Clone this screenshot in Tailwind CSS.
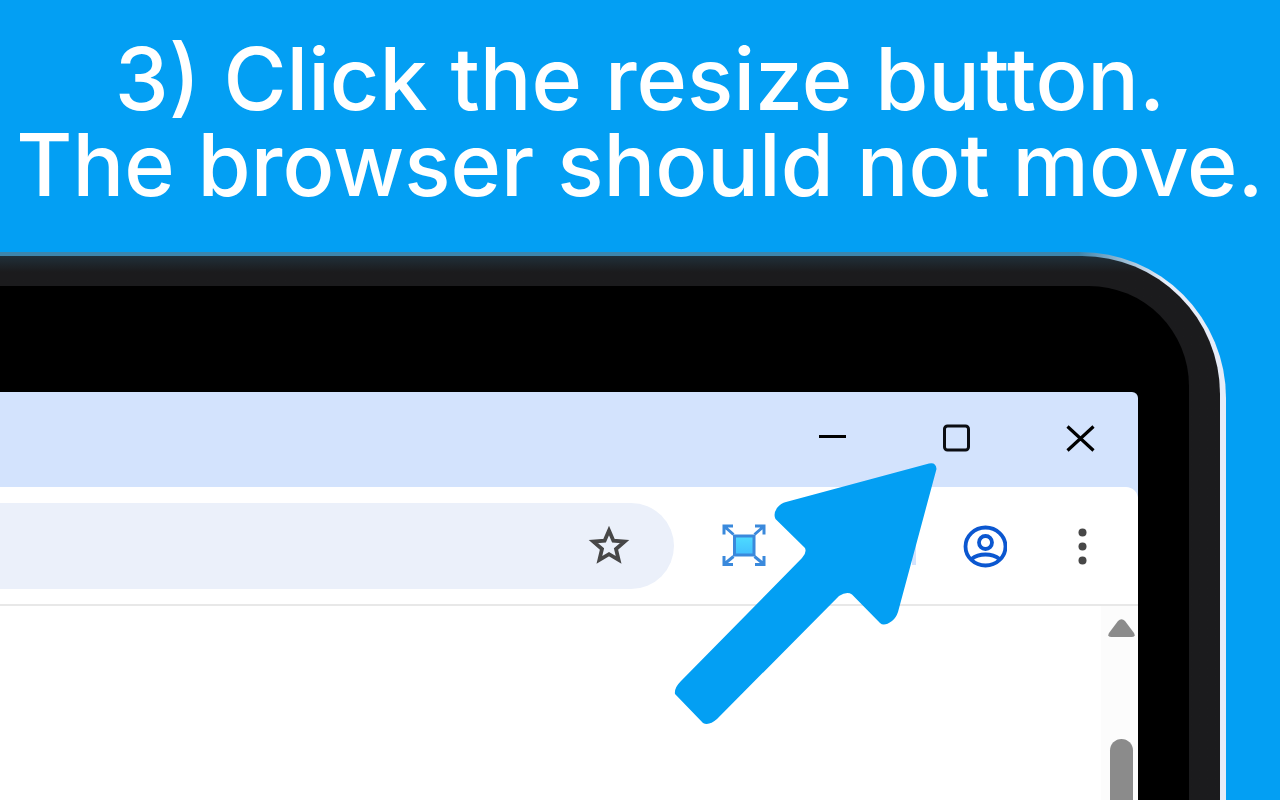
<!DOCTYPE html>
<html lang="en">
<head>
<meta charset="utf-8">
<meta name="viewport" content="width=device-width, initial-scale=1">
<title>Step 3: click the resize button</title>
<script src="https://cdn.jsdelivr.net/npm/@tailwindcss/browser@4"></script>
</head>
<body class="flex h-screen flex-col overflow-hidden bg-[#039ff3]">
<header class="h-[252px] shrink-0 pt-9 text-center">
  <h1 class="whitespace-nowrap font-['Inter','Liberation_Sans',sans-serif] text-[86px] leading-[86px] font-medium text-white">3) Click the resize button.<br>The browser should not move.</h1>
</header>

<!-- Laptop lid: metal rim, rubber edge, black bezel, screen -->
<div class="mr-[54px] min-h-0 flex-1 rounded-tr-[146px] bg-linear-to-r from-[#3d86ad] from-88% to-[#e6ecf8] to-95% pt-1 pr-[6px]">
  <div class="h-full rounded-tr-[138px] bg-[#1b1b1d] bg-linear-to-b from-[#20303a] to-[#1b1b1d] to-[16px] pt-[30px] pr-[31px]">
    <div class="h-full rounded-tr-[100px] bg-black pt-[106px] pr-[51px]">
      <main class="relative flex h-full flex-col overflow-hidden rounded-tr-md bg-[#d3e3fd]">
        <div class="flex h-[95px] shrink-0 justify-end gap-2">
          <button class="flex w-[116px] items-center justify-center" aria-label="Minimize">
            <svg class="h-8 w-8" viewBox="0 0 32 32" fill="none" stroke="#000" stroke-width="3"><path d="M3 12.500h27"/></svg>
          </button>
          <button class="flex w-[116px] items-center justify-center" aria-label="Resize">
            <svg class="h-8 w-8" viewBox="0 0 32 32" fill="none" stroke="#0b0d12" stroke-width="3"><rect x="4.500" y="2" width="24" height="24" rx="3"/></svg>
          </button>
          <button class="flex w-[116px] items-center justify-center" aria-label="Close">
            <svg class="h-8 w-8" viewBox="0 0 32 32" fill="none" stroke="#000" stroke-width="3.200"><path d="M3.500 2.500l26 24M29.500 2.500l-26 24"/></svg>
          </button>
        </div>

        <div class="flex h-[119px] shrink-0 items-center rounded-tr-xl border-b-2 border-[#e8e8e8] bg-white">
          <div class="flex h-[86px] min-w-0 flex-1 items-center rounded-r-full bg-[#ebf0fa] pr-[44px]">
            <input class="h-full min-w-0 flex-1 bg-transparent outline-none" type="text" aria-label="Address">
            <button aria-label="Bookmark this page">
              <svg class="h-[42px] w-[42px]" viewBox="0 0 42 42" fill="none" stroke="#474747" stroke-width="3.800"><path d="M21 5.500l4.400 10.200 11.200.9-8.600 7.400 2.600 10.800L21 29.200l-9.600 5.600 2.600-10.800-8.600-7.400 11.200-.9z"/></svg>
            </button>
          </div>
          <button class="ml-[38px] flex w-16 justify-center" aria-label="Window resizer extension">
            <svg class="h-11 w-11" viewBox="0 0 44 44" fill="none" stroke="#3a89dc" stroke-width="3">
              <defs><linearGradient id="cyan" x1="0" y1="0" x2="0" y2="1"><stop stop-color="#4edcff"/><stop offset="1" stop-color="#42bfff"/></linearGradient></defs>
              <rect x="12.500" y="12" width="19.500" height="19" fill="url(#cyan)"/>
              <path d="M2 10.500V2h9M3 3l8.500 7.500M33 2h9V10.500M41 3L32.500 10.500M2 32v8.500h9M3 39.500l8.500-7M33 40.500h9V32M41 39.500L32.500 32.500"/>
            </svg>
          </button>
          <div class="ml-[136px] h-[38px] w-1 bg-[#d3e3fd]"></div>
          <button class="ml-[37px] flex w-16 justify-center" aria-label="Profile">
            <svg class="h-11 w-11" viewBox="0 0 44 44" fill="none" stroke="#0b57d0" stroke-width="3.800"><ellipse cx="22.500" cy="22.500" rx="20" ry="19"/><circle cx="22.500" cy="18.500" r="6.500"/><path d="M8.500 35c7.500-6 20.500-6 28 0"/></svg>
          </button>
          <button class="mr-[23px] ml-[34px] flex w-16 justify-center" aria-label="Menu">
            <svg class="h-11 w-11" viewBox="0 0 44 44" fill="#474747"><circle cx="21.500" cy="8.500" r="4"/><circle cx="21.500" cy="22.500" r="4"/><circle cx="21.500" cy="36.500" r="4"/></svg>
          </button>
        </div>

        <div class="flex min-h-0 flex-1 justify-end bg-white">
          <div class="flex w-[37px] flex-col items-center bg-[#fcfcfc] pt-[13px]">
            <svg class="ml-1 h-[18px] w-[27px] shrink-0" viewBox="0 0 27 18" fill="#8b8b8b"><path d="M10 2q3.500-3.500 7 0l9 12q2 4-2 4H3q-4 0-2-4z"/></svg>
            <div class="mt-[102px] ml-1 w-[23px] flex-1 rounded-t-full bg-[#8b8b8b]"></div>
          </div>
        </div>

        <!-- Pointer towards the resize button -->
        <svg class="pointer-events-none absolute top-[70px] right-[200px] h-[264px] w-[264px]" viewBox="674 462 264 264" fill="#039ff3" aria-hidden="true">
          <path d="M929 463.500Q936 462 936.500 469L898 612Q896 618 892 621Q884 627 880 623L852 594.500Q847 591 839 596L717 719Q709 726 703 723L675 694Q674 688 681 681L802 558Q807 553 805 548L775.500 519Q773 514 777 508Q781 503 786 502Z"/>
        </svg>
      </main>
    </div>
  </div>
</div>
</body>
</html>
